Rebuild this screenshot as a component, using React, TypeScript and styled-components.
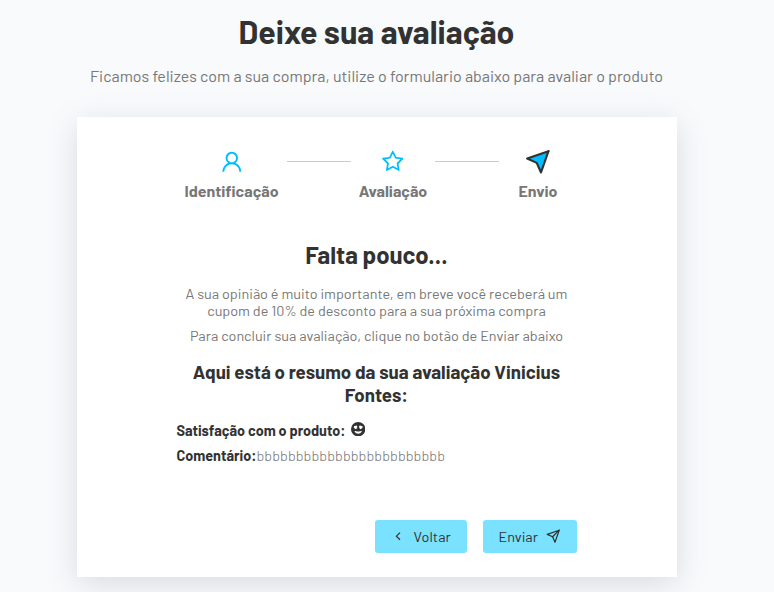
import React from "react";
import styled, { createGlobalStyle } from "styled-components";
import { AiOutlineUser, AiOutlineStar } from "react-icons/ai";
import { FiSend } from "react-icons/fi";
import { GrFormPrevious } from "react-icons/gr";
import { BsFillEmojiHeartEyesFill } from "react-icons/bs";

const GlobalStyle = createGlobalStyle`
  * { margin: 0; padding: 0; box-sizing: border-box; }
  body {
    background: #f8fafc;
    color: #323232;
    font-family: Barlow, Roboto, sans-serif;
    overflow: hidden;
  }
  p, h2, h3, span { white-space: nowrap; }
`;

const Page = styled.div`
  width: 753px;
  height: 592px;
  display: flex;
  flex-direction: column;
  align-items: center;
`;

const Header = styled.header`
  height: 117px;
  padding-top: 12px;
  text-align: center;
`;

const Title = styled.h2`
  font-size: 32px;
  line-height: 38px;
  font-weight: 700;
`;

const Subtitle = styled.p`
  margin-top: 16px;
  font-size: 16px;
  line-height: 19px;
  color: #777;
`;

const Card = styled.main`
  width: 600px;
  height: 460px;
  flex: none;
  background: #fff;
  box-shadow: rgba(100, 100, 111, 0.2) 0 7px 29px 0;
  padding: 32px 100px 24px;
  display: flex;
  flex-direction: column;
`;

const Steps = styled.div`
  display: flex;
  align-items: flex-start;
  gap: 8px;
  margin-left: 7.5px;
`;

const Step = styled.div<{ $width: number }>`
  width: ${(p) => p.$width}px;
  display: flex;
  flex-direction: column;
  align-items: center;
  gap: 6px;
  color: #777;
  font-size: 16px;
  line-height: 19px;
  font-weight: 700;
  svg { color: #00bfff; width: 25.6px; height: 25.6px; }
  svg.active { color: #323232; fill: #00bfff; }
`;

const Connector = styled.div`
  width: 64px;
  height: 1px;
  margin-top: 12px;
  background: #ccc;
`;

const Thanks = styled.section`
  margin-top: 40px;
  display: flex;
  flex-direction: column;
  align-items: center;
  text-align: center;
`;

const Heading = styled.h2`
  font-size: 24px;
  line-height: 29px;
  font-weight: 700;
  margin-bottom: 16px;
`;

const Paragraph = styled.p`
  font-size: 14.4px;
  line-height: 17px;
  color: #777;
  margin-bottom: 8px;
`;

const Summary = styled.h3`
  margin: 8px 0 16px;
  font-size: 18.72px;
  line-height: 23px;
  font-weight: 700;
`;

const Review = styled.p`
  display: flex;
  align-items: center;
  height: 17px;
  margin-bottom: 8px;
  font-size: 14.4px;
  font-weight: 700;
  svg { margin-left: 5px; margin-top: -2px; }
`;

const Comment = styled.span`
  font-weight: 300;
  letter-spacing: 0.1px;
  color: #777;
`;

const Actions = styled.div`
  margin-top: auto;
  display: flex;
  justify-content: flex-end;
  gap: 16px;
`;

const Button = styled.button<{ $width: number }>`
  width: ${(p) => p.$width}px;
  height: 33px;
  display: flex;
  align-items: center;
  padding: 0 16px 1px;
  gap: 8px;
  border: none;
  border-radius: 3px;
  background: #7ae1ff;
  color: #323232;
  font: 400 14.4px Barlow, Roboto, sans-serif;
  svg { flex: none; }
  svg path { stroke: #323232; }
  svg + span { margin-left: 0.7px; letter-spacing: 0.1px; }
`;

export default function App() {
  return (
    <>
      <GlobalStyle />
      <Page>
        <Header>
          <Title>Deixe sua avaliação</Title>
          <Subtitle>
            Ficamos felizes com a sua compra, utilize o formulario abaixo para avaliar o produto
          </Subtitle>
        </Header>
        <Card>
          <Steps>
            <Step $width={95}>
              <AiOutlineUser />
              <span>Identificação</span>
            </Step>
            <Connector />
            <Step $width={68}>
              <AiOutlineStar />
              <span>Avaliação</span>
            </Step>
            <Connector />
            <Step $width={62}>
              <FiSend className="active" />
              <span>Envio</span>
            </Step>
          </Steps>
          <Thanks>
            <Heading>Falta pouco...</Heading>
            <Paragraph>
              A sua opinião é muito importante, em breve você receberá um
              <br />
              cupom de 10% de desconto para a sua próxima compra
            </Paragraph>
            <Paragraph>Para concluir sua avaliação, clique no botão de Enviar abaixo</Paragraph>
            <Summary>
              Aqui está o resumo da sua avaliação Vinicius
              <br />
              Fontes:
            </Summary>
          </Thanks>
          <Review>
            <span>Satisfação com o produto:</span>
            <BsFillEmojiHeartEyesFill size={14.4} />
          </Review>
          <Review>
            <span>Comentário:</span>
            <Comment>bbbbbbbbbbbbbbbbbbbbbbbb</Comment>
          </Review>
          <Actions>
            <Button $width={92}>
              <GrFormPrevious size={14.4} />
              <span>Voltar</span>
            </Button>
            <Button $width={94}>
              <span>Enviar</span>
              <FiSend size={14.4} />
            </Button>
          </Actions>
        </Card>
      </Page>
    </>
  );
}
